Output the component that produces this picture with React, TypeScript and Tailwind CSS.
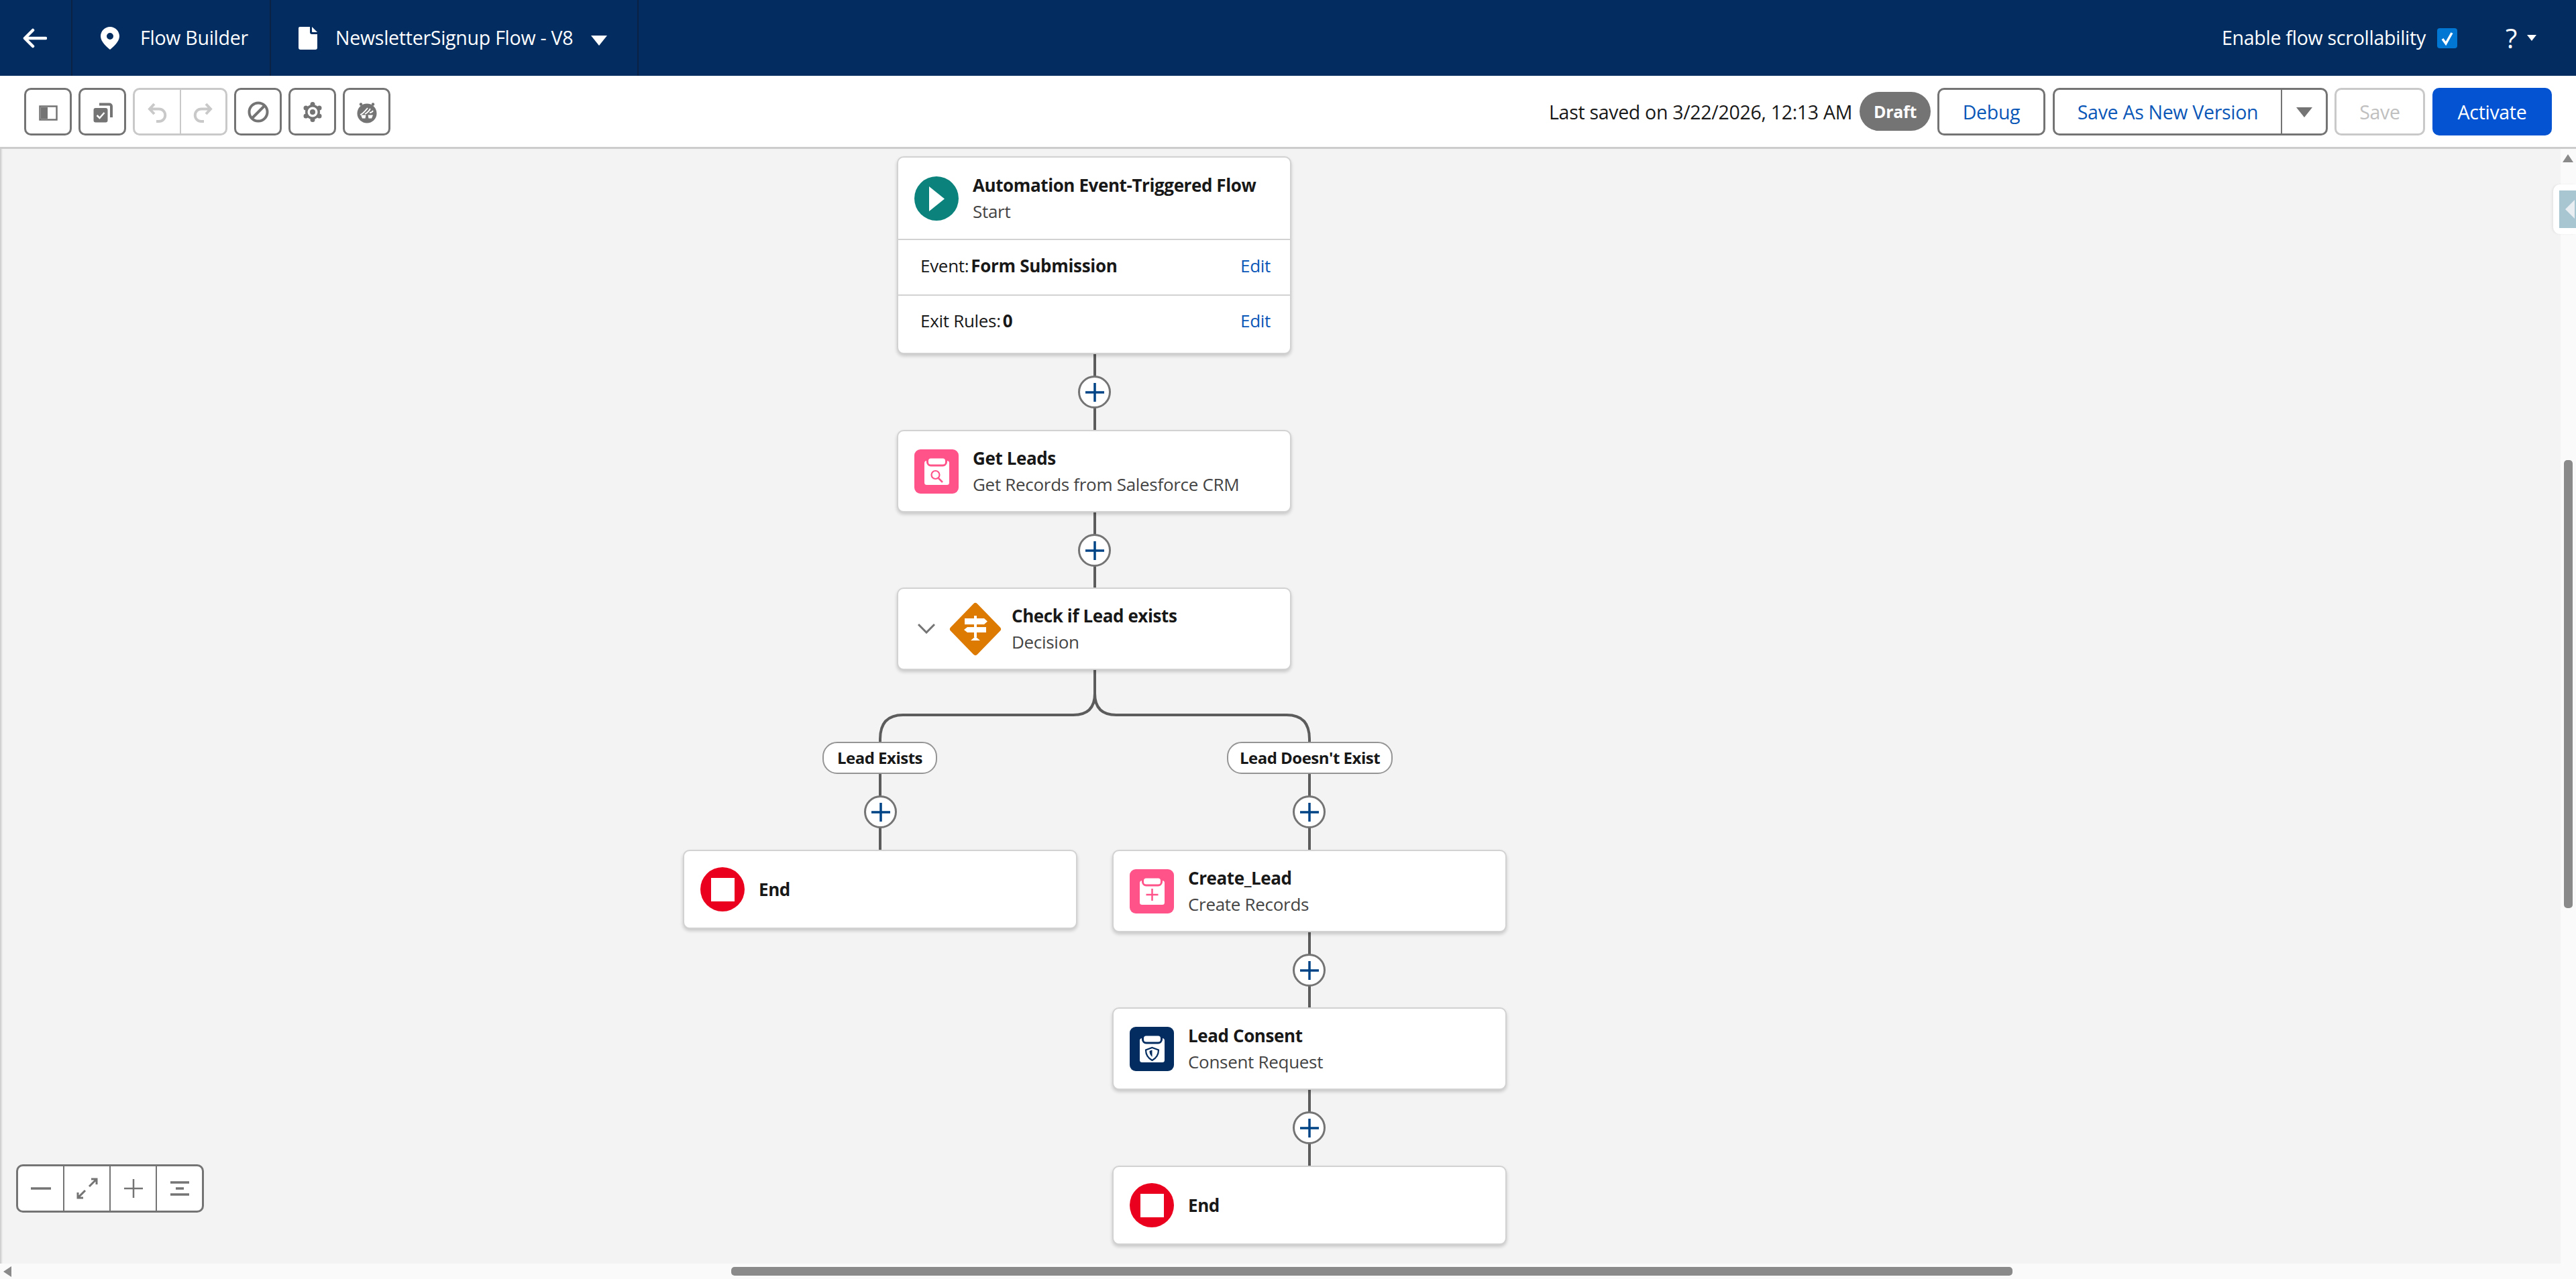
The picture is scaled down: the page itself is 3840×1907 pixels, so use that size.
import type { ReactNode } from 'react';

const iconBtn = 'flex h-[71px] w-[71px] items-center justify-center rounded-[10px] border-[3px] border-[#747474] bg-white';
const outlineBtn = 'flex h-[71px] items-center justify-center rounded-[10px] border-[3px] border-[#747474] bg-white pt-[3px] text-[#0b57b8]';

function Node({ className, children }: { className: string; children: ReactNode }) {
  return (
    <div className={`absolute w-[588px] overflow-hidden rounded-[10px] border-2 border-[#d2d2d2] bg-white shadow-[0_3px_5px_rgba(0,0,0,0.18)] ${className}`}>
      {children}
    </div>
  );
}

function Labels({ title, sub, left = 'ml-[21px]' }: { title: string; sub?: string; left?: string }) {
  return (
    <div className={`${left} flex flex-col whitespace-nowrap`}>
      <span className="text-[26px] font-bold leading-[39px] tracking-[-0.4px] text-[#181818]">{title}</span>
      {sub && <span className="text-[26px] leading-[39px] tracking-[-0.3px] text-[#444444]">{sub}</span>}
    </div>
  );
}

function ClipboardIcon({ bg, children }: { bg: string; children: ReactNode }) {
  return (
    <svg width="66" height="66" viewBox="0 0 66 66" className="shrink-0">
      <rect width="66" height="66" rx="9" fill={bg} />
      <rect x="15" y="17" width="37" height="36" rx="3.5" fill="#fff" />
      <rect x="19.5" y="12" width="28" height="12" rx="5" fill="#fff" stroke={bg} strokeWidth="3" />
      {children}
    </svg>
  );
}

function EndIcon() {
  return (
    <svg width="66" height="66" viewBox="0 0 66 66" className="shrink-0">
      <circle cx="33" cy="33" r="33" fill="#ea001e" />
      <rect x="16" y="16" width="35" height="35" fill="#fff" />
    </svg>
  );
}

function AddButton({ className }: { className: string }) {
  return (
    <button type="button" className={`absolute flex h-[49px] w-[49px] items-center justify-center rounded-full border-[3.5px] border-[#747474] bg-white ${className}`}>
      <svg width="30" height="30" viewBox="0 0 30 30">
        <path d="M1 15H29M15 1V29" stroke="#014486" strokeWidth="3.5" />
      </svg>
    </button>
  );
}

function Pill({ className, label }: { className: string; label: string }) {
  return (
    <div className={`absolute flex h-[48px] items-center justify-center rounded-[22px] border-2 border-[#959595] bg-white text-[24px] font-bold tracking-[-0.5px] text-[#181818] ${className}`}>
      {label}
    </div>
  );
}

function EndNode({ className }: { className: string }) {
  return (
    <Node className={`h-[118px] ${className}`}>
      <div className="flex h-full items-center pl-[24px]">
        <EndIcon />
        <Labels title="End" />
      </div>
    </Node>
  );
}

export default function App() {
  return (
    <div className="flex h-[1907px] w-[3840px] flex-col overflow-hidden bg-[#f3f3f3] font-['Open_Sans',sans-serif]">
      {/* Top bar */}
      <header className="flex h-[113px] shrink-0 items-center bg-[#032d60] text-[28.5px] tracking-[-0.25px] text-white">
        <div className="flex h-full w-[108px] items-center justify-center border-r-2 border-[#0c2244] pr-[2px]">
          <svg width="36" height="30" viewBox="0 0 36 30" fill="none" stroke="#fff" strokeWidth="4.5" strokeLinecap="round" strokeLinejoin="round">
            <path d="M3 15H34M15 3 3 15 15 27" />
          </svg>
        </div>
        <div className="flex h-full w-[296px] items-center border-r-2 border-[#0c2244] pl-[42px]">
          <svg width="28" height="34" viewBox="0 0 28 34" className="shrink-0">
            <path fillRule="evenodd" fill="#fff" d="M14 0C6 0 0 6.500 0 14c0 8 9 16 14 20 5-4 14-12 14-20C28 6.500 22 0 14 0Zm0 9a5 5 0 1 1 0 10 5 5 0 0 1 0-10Z" />
          </svg>
          <span className="ml-[31px]">Flow Builder</span>
        </div>
        <div className="flex h-full w-[548px] items-center border-r-2 border-[#0c2244] pl-[41px]">
          <svg width="28" height="34" viewBox="0 0 28 34" className="shrink-0">
            <path fill="#fff" d="M2 0H17V8a3 3 0 0 0 3 3H28V31a3 3 0 0 1-3 3H3a3 3 0 0 1-3-3V2a2 2 0 0 1 2-2ZM20 0 28 8H21a1 1 0 0 1-1-1Z" />
          </svg>
          <span className="ml-[27px]">NewsletterSignup Flow - V8</span>
          <svg width="24" height="15" viewBox="0 0 24 15" className="ml-[27px] mt-[8px] shrink-0">
            <path d="M0 0H24L12 15Z" fill="#fff" />
          </svg>
        </div>
        <div className="ml-auto flex items-center pr-[59px]">
          <span>Enable flow scrollability</span>
          <span className="ml-[17px] flex h-[30px] w-[30px] items-center justify-center rounded-[4px] bg-[#0176d3]">
            <svg width="22" height="24" viewBox="0 0 22 24" fill="none" stroke="#fff" strokeWidth="3.500">
              <path d="M4 13 9 20 18 4" />
            </svg>
          </span>
          <span className="ml-[72px] text-[40px] font-normal leading-none">?</span>
          <svg width="14" height="9" viewBox="0 0 14 9" className="ml-[15px]">
            <path d="M0 0H14L7 9Z" fill="#fff" />
          </svg>
        </div>
      </header>

      {/* Toolbar */}
      <div className="flex h-[109px] shrink-0 items-center justify-between border-b-[3px] border-[#cccccc] bg-white pl-[36px] pr-[36px]">
        <div className="flex items-center">
          <button type="button" className={iconBtn}>
            <svg width="36" height="36" viewBox="0 0 36 36">
              <rect x="5.500" y="10.500" width="25" height="20" fill="#fff" stroke="#747474" strokeWidth="2.500" />
              <rect x="7" y="12" width="10" height="17" fill="#747474" />
            </svg>
          </button>
          <button type="button" className={`${iconBtn} ml-[10px]`}>
            <svg width="36" height="36" viewBox="0 0 36 36">
              <path d="M13 7.500H28a3 3 0 0 1 3 3V27" fill="none" stroke="#747474" strokeWidth="4" />
              <rect x="4.500" y="13" width="21" height="21.500" rx="3" fill="#747474" />
              <path d="M9.500 24 13.500 28 20.500 20" fill="none" stroke="#fff" strokeWidth="2.500" />
            </svg>
          </button>
          <div className="ml-[10px] flex h-[71px] w-[141px] rounded-[10px] border-[3px] border-[#c9c9c9] bg-white">
            <button type="button" className="flex flex-1 items-center justify-center border-r-2 border-[#c9c9c9]">
              <svg width="36" height="36" viewBox="0 0 36 36" fill="none" stroke="#c9c9c9" strokeWidth="4">
                <path d="M14 7 7 14.500 14 22M7 14.500H21A9 9 0 0 1 21 33H17" />
              </svg>
            </button>
            <button type="button" className="flex flex-1 items-center justify-center">
              <svg width="36" height="36" viewBox="0 0 36 36" fill="none" stroke="#c9c9c9" strokeWidth="4">
                <path d="M22 7 29 14.500 22 22M29 14.500H15A9 9 0 0 0 15 33H19" />
              </svg>
            </button>
          </div>
          <button type="button" className={`${iconBtn} ml-[10px]`}>
            <svg width="36" height="36" viewBox="0 0 36 36" fill="none" stroke="#747474" strokeWidth="4">
              <circle cx="18" cy="19" r="13.500" />
              <path d="M8.500 28.500 27.500 9.500" />
            </svg>
          </button>
          <button type="button" className={`${iconBtn} ml-[10px]`}>
            <svg width="36" height="36" viewBox="0 0 36 36">
              <g fill="#747474">
                <circle cx="18" cy="19" r="11" />
                <circle cx="18" cy="7.500" r="3.500" />
                <circle cx="18" cy="30.500" r="3.500" />
                <circle cx="8" cy="13" r="3.500" />
                <circle cx="28" cy="13" r="3.500" />
                <circle cx="8" cy="25" r="3.500" />
                <circle cx="28" cy="25" r="3.500" />
              </g>
              <circle cx="18" cy="19" r="7.500" fill="#fff" />
              <circle cx="18" cy="19" r="4" fill="#747474" />
            </svg>
          </button>
          <button type="button" className={`${iconBtn} ml-[10px]`}>
            <svg width="36" height="36" viewBox="0 0 36 36">
              <g fill="#747474">
                <circle cx="18" cy="21" r="14.500" />
                <circle cx="9" cy="7.500" r="2.200" />
                <circle cx="27" cy="7.500" r="2.200" />
                <path d="M8 8 11 11 10 12ZM28 8 25 11 26 12Z" />
              </g>
              <path d="M8 23C12 22 14 19 19 13M15 22C19 20 21 18 23 14M22 20C25 20 26 19 27 17" fill="none" stroke="#fff" strokeWidth="1.800" />
              <path d="M9 23.500H16.500L15.500 28.500H11ZM19.500 23.500H27L25 28.500H20.500Z" fill="#fff" />
            </svg>
          </button>
        </div>
        <div className="flex items-center text-[28.5px] tracking-[-0.3px]">
          <span className="pt-[3px] text-[#181818]">Last saved on 3/22/2026, 12:13 AM</span>
          <span className="ml-[11px] flex h-[58px] w-[106px] items-center justify-center rounded-full bg-[#747474] pt-[2px] text-[25px] font-bold text-white">Draft</span>
          <button type="button" className={`${outlineBtn} ml-[10px] w-[161px]`}>Debug</button>
          <div className="ml-[11px] flex h-[71px] w-[410px] rounded-[10px] border-[3px] border-[#747474] bg-white">
            <button type="button" className="flex-1 border-r-2 border-[#747474] pt-[3px] text-[#0b57b8]">Save As New Version</button>
            <button type="button" className="flex w-[65px] items-center justify-center pt-[3px]">
              <svg width="24" height="15" viewBox="0 0 24 15">
                <path d="M0 0H24L12 15Z" fill="#747474" />
              </svg>
            </button>
          </div>
          <button type="button" className="ml-[10px] flex h-[71px] w-[135px] items-center justify-center rounded-[10px] border-[3px] border-[#c9c9c9] bg-white pt-[3px] text-[#c0c0c0]">Save</button>
          <button type="button" className="ml-[11px] flex h-[71px] w-[178px] items-center justify-center rounded-[10px] bg-[#0353d2] pt-[3px] text-white">Activate</button>
        </div>
      </div>

      {/* Canvas */}
      <main className="relative flex-1 shadow-[inset_4px_0_3px_-2px_rgba(0,0,0,0.18)]">
        <svg className="absolute inset-0 h-full w-full" viewBox="0 0 3840 1685" fill="none" stroke="#5c5c5c" strokeWidth="4">
          <path d="M1632 305V419M1632 541V654M1632 776V812Q1632 844 1600 844H1346Q1312 844 1312 880V884M1632 812Q1632 844 1664 844H1918Q1952 844 1952 880V884" />
          <path d="M1312 932V1045M1952 932V1045M1952 1167V1280M1952 1402V1516" />
        </svg>

        <Node className="left-[1337px] top-[11px] h-[295px]">
          <div className="flex h-[123px] items-center border-b-2 border-[#d2d2d2] pl-[24px]">
            <svg width="66" height="66" viewBox="0 0 66 66" className="shrink-0">
              <circle cx="33" cy="33" r="33" fill="#0b827c" />
              <path d="M22 15 45 33.500 22 52Z" fill="#fff" />
            </svg>
            <Labels title="Automation Event-Triggered Flow" sub="Start" />
          </div>
          <div className="flex h-[83px] items-center justify-between border-b-2 border-[#d2d2d2] pb-[5px] pl-[33px] pr-[29px] text-[26px] tracking-[-0.3px] text-[#181818]">
            <span>Event:<b className="ml-[3px]">Form Submission</b></span>
            <a href="#edit-event" className="text-[#0b57b8]">Edit</a>
          </div>
          <div className="flex h-[83px] items-center justify-between pb-[9px] pl-[33px] pr-[29px] text-[26px] tracking-[-0.3px] text-[#181818]">
            <span>Exit Rules:<b className="ml-[3px]">0</b></span>
            <a href="#edit-exit" className="text-[#0b57b8]">Edit</a>
          </div>
        </Node>

        <AddButton className="left-[1607px] top-[338px]" />

        <Node className="left-[1337px] top-[419px] h-[123px]">
          <div className="flex h-full items-center pl-[24px]">
            <ClipboardIcon bg="#ff538a">
              <circle cx="31.500" cy="38" r="6" fill="none" stroke="#ff538a" strokeWidth="2.200" />
              <path d="M36 43 42 49" stroke="#ff538a" strokeWidth="2.500" />
            </ClipboardIcon>
            <Labels title="Get Leads" sub="Get Records from Salesforce CRM" />
          </div>
        </Node>

        <AddButton className="left-[1607px] top-[574px]" />

        <Node className="left-[1337px] top-[654px] h-[123px]">
          <div className="flex h-full items-center pl-[29px]">
            <svg width="26" height="15" viewBox="0 0 26 15" fill="none" stroke="#747474" strokeWidth="3" className="shrink-0">
              <path d="M1 1 13 13 25 1" />
            </svg>
            <svg width="78" height="80" viewBox="0 0 78 80" className="ml-[21px] shrink-0">
              <path d="M39 5 73 40 39 75 5 40Z" fill="#dd7a01" stroke="#dd7a01" strokeWidth="8" strokeLinejoin="round" />
              <path d="M23 24H52L57 28.500 52 33H23ZM55 37H27L22 41 27 45H55Z" fill="#fff" />
              <path d="M37 20H41V52H37Z" fill="#fff" />
              <path d="M39 51 46 57H32Z" fill="#fff" />
            </svg>
            <Labels title="Check if Lead exists" sub="Decision" left="ml-[15px]" />
          </div>
        </Node>

        <Pill className="left-[1226px] top-[884px] w-[171px]" label="Lead Exists" />
        <Pill className="left-[1829px] top-[884px] w-[247px]" label="Lead Doesn't Exist" />

        <AddButton className="left-[1288px] top-[964px]" />
        <AddButton className="left-[1927px] top-[964px]" />

        <EndNode className="left-[1018px] top-[1045px]" />

        <Node className="left-[1658px] top-[1045px] h-[123px]">
          <div className="flex h-full items-center pl-[24px]">
            <ClipboardIcon bg="#ff538a">
              <path d="M33.500 29V47M24.500 38H42.500" stroke="#ff538a" strokeWidth="2.500" />
            </ClipboardIcon>
            <Labels title="Create_Lead" sub="Create Records" />
          </div>
        </Node>

        <AddButton className="left-[1927px] top-[1200px]" />

        <Node className="left-[1658px] top-[1280px] h-[123px]">
          <div className="flex h-full items-center pl-[24px]">
            <ClipboardIcon bg="#032d60">
              <path d="M33.500 31 43 34.500C43 42 39 47 33.500 50 28 47 24 42 24 34.500Z" fill="none" stroke="#032d60" strokeWidth="2.200" />
              <path d="M33.500 34.500V45C31 42.500 29.500 40 29.500 36Z" fill="#032d60" />
            </ClipboardIcon>
            <Labels title="Lead Consent" sub="Consent Request" />
          </div>
        </Node>

        <AddButton className="left-[1927px] top-[1435px]" />

        <EndNode className="left-[1658px] top-[1516px]" />

        {/* Zoom controls */}
        <div className="absolute left-[24px] top-[1514px] flex h-[72px] w-[280px] rounded-[10px] border-[3px] border-[#747474] bg-white">
          <button type="button" className="flex flex-1 items-center justify-center border-r-2 border-[#747474]">
            <svg width="32" height="32" viewBox="0 0 32 32"><path d="M1 16H31" stroke="#747474" strokeWidth="3.500" /></svg>
          </button>
          <button type="button" className="flex flex-1 items-center justify-center border-r-2 border-[#747474]">
            <svg width="36" height="36" viewBox="0 0 36 36" fill="none" stroke="#747474" strokeWidth="3">
              <path d="M21 15 31 5M24 4H32V12M15 21 5 31M4 24V32H12" />
            </svg>
          </button>
          <button type="button" className="flex flex-1 items-center justify-center border-r-2 border-[#747474]">
            <svg width="32" height="32" viewBox="0 0 32 32"><path d="M2 16H30M16 2V30" stroke="#747474" strokeWidth="2.500" /></svg>
          </button>
          <button type="button" className="flex flex-1 items-center justify-center">
            <svg width="32" height="32" viewBox="0 0 32 32"><path d="M2 7H30M10 16H22M2 25H30" stroke="#747474" strokeWidth="3.500" /></svg>
          </button>
        </div>

        {/* Scrollbars */}
        <div className="absolute bottom-0 right-0 top-0 w-[23px] bg-[#fafafa]">
          <svg width="16" height="12" viewBox="0 0 16 12" className="absolute left-[3px] top-[8px]"><path d="M8 0 16 12H0Z" fill="#8a8a8a" /></svg>
          <div className="absolute left-[5px] top-[464px] h-[668px] w-[13px] rounded-[5px] bg-[#8a8a8a]" />
        </div>
        <div className="absolute bottom-0 left-0 right-[23px] h-[23px] bg-[#fafafa]">
          <svg width="12" height="16" viewBox="0 0 12 16" className="absolute left-[5px] top-[4px]"><path d="M0 8 12 0V16Z" fill="#8a8a8a" /></svg>
          <div className="absolute left-[1090px] top-[5px] h-[13px] w-[1910px] rounded-[5px] bg-[#8a8a8a]" />
        </div>

        {/* Side panel toggle */}
        <div className="absolute right-0 top-[53px] flex h-[74px] w-[34px] items-center rounded-l-[10px] bg-white pl-[9px] shadow-[-2px_0_3px_rgba(0,0,0,0.06)]">
          <div className="flex h-[56px] w-[25px] items-center justify-start bg-[#a8c5d2] pl-[9px]">
            <svg width="14" height="28" viewBox="0 0 14 28"><path d="M14 0V28L0 14Z" fill="#e8eef1" /></svg>
          </div>
        </div>
      </main>
    </div>
  );
}
